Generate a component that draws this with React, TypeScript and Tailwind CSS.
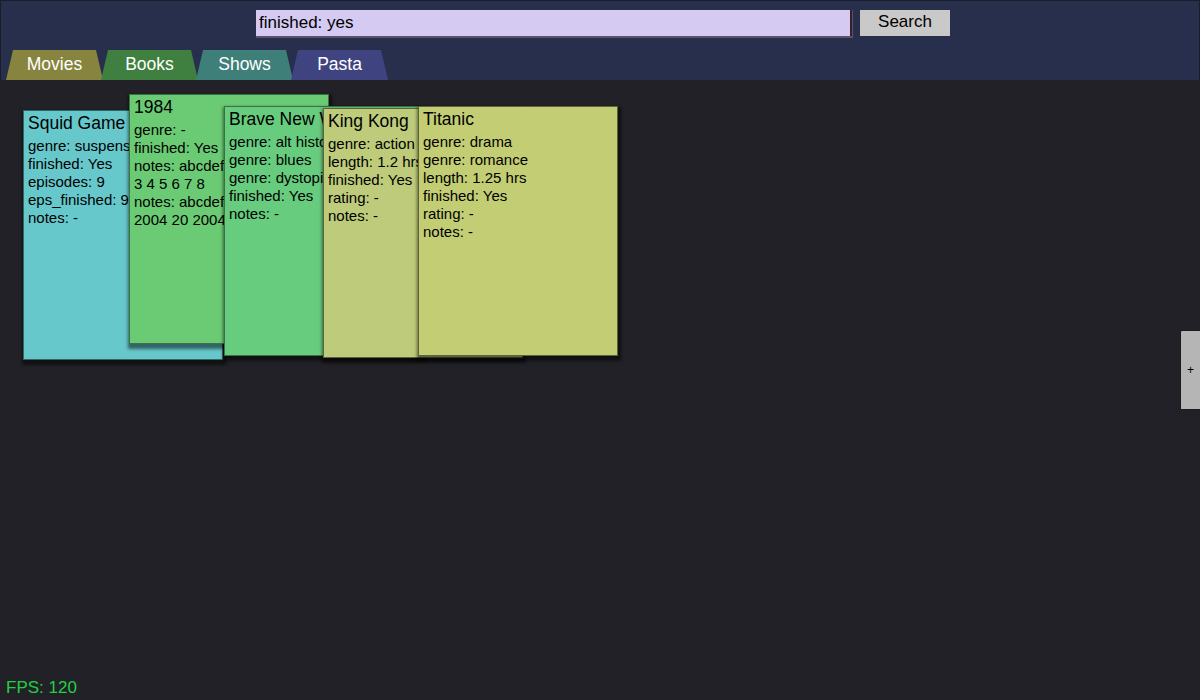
import React from 'react';

type Card = {
  title: string;
  lines: string[];
  x: number;
  y: number;
  bg: string;
};

const TABS = [
  { label: 'Movies', bg: 'bg-[#878440]' },
  { label: 'Books', bg: 'bg-[#3f7f40]' },
  { label: 'Shows', bg: 'bg-[#3f7f79]' },
  { label: 'Pasta', bg: 'bg-[#3f4480]' },
];

const CARDS: Card[] = [
  {
    title: 'Squid Game',
    lines: ['genre: suspense', 'finished: Yes', 'episodes: 9', 'eps_finished: 9', 'notes: -'],
    x: 23,
    y: 30,
    bg: 'bg-[#67c8cc] border-[#2f6668]',
  },
  {
    title: '1984',
    lines: ['genre: -', 'finished: Yes', 'notes: abcdefghij 1 2', '3 4 5 6 7 8', 'notes: abcdefghij', '2004 20 2004 20'],
    x: 129,
    y: 14,
    bg: 'bg-[#6bcb74] border-[#3a7240]',
  },
  {
    title: 'Brave New World',
    lines: ['genre: alt history', 'genre: blues', 'genre: dystopia', 'finished: Yes', 'notes: -'],
    x: 224,
    y: 26,
    bg: 'bg-[#67cc7e] border-[#3a7047]',
  },
  {
    title: 'King Kong',
    lines: ['genre: action', 'length: 1.2 hrs', 'finished: Yes', 'rating: -', 'notes: -'],
    x: 323,
    y: 28,
    bg: 'bg-[#bdcb7a] border-[#5c633a]',
  },
  {
    title: 'Titanic',
    lines: ['genre: drama', 'genre: romance', 'length: 1.25 hrs', 'finished: Yes', 'rating: -', 'notes: -'],
    x: 418,
    y: 26,
    bg: 'bg-[#c3cd73] border-[#5e6338]',
  },
];

export default function App() {
  return (
    <div className="w-[1200px] h-[700px] bg-[#222127] flex flex-col overflow-hidden relative font-['Liberation_Sans',Arial,sans-serif] text-[17px]">
      <div className="h-[80px] bg-[#272f4d] border-t border-x border-[#191c29] flex flex-col shrink-0">
        <div className="flex justify-center items-start gap-[7px] pt-[9px] pl-[6px]">
          <div className="w-[597px] h-[28px] bg-[#d5caf1] border-r border-b-2 border-[#57536b] shadow-[inset_-2px_0_0_#3a1d26] flex items-center pl-[3px] text-black">
            finished: yes
          </div>
          <button className="w-[90px] h-[26px] bg-[#c9c9c9] text-black leading-none pb-[3px]">Search</button>
        </div>
        <div className="flex mt-auto pl-[5px]">
          {TABS.map((t, i) => (
            <div
              key={t.label}
              className={`w-[97px] h-[30px] ${i > 0 ? '-ml-[2px]' : ''} ${t.bg} text-white text-[17.5px] flex items-center justify-center pb-[2px] [clip-path:polygon(7px_0,calc(100%-7px)_0,100%_100%,0_100%)]`}
            >
              {t.label}
            </div>
          ))}
        </div>
      </div>

      <div className="flex-1 relative">
        {CARDS.map(c => (
          <div
            key={c.title}
            className={`absolute w-[200px] h-[250px] border ${c.bg} overflow-hidden px-[4px] pt-[2px] shadow-[1px_3px_3px_2px_rgba(0,0,0,0.5)] text-black`}
            style={{ left: c.x, top: c.y }}
          >
            <div className="text-[17.5px] leading-[20px] whitespace-nowrap">{c.title}</div>
            <div className="mt-[4px] text-[15px] leading-[18px]">
              {c.lines.map((l, i) => (
                <div key={i} className="whitespace-nowrap">{l}</div>
              ))}
            </div>
          </div>
        ))}

        <div className="absolute right-0 top-[250px] w-[20px] h-[80px] bg-[#b5b5b5] border border-r-0 border-[#1b1b1e] rounded-tl-[2px] flex items-center justify-center text-[12px] text-black">
          +
        </div>

        <div className="absolute left-[6px] bottom-0 text-[#22d044]">FPS: 120</div>
      </div>
    </div>
  );
}
